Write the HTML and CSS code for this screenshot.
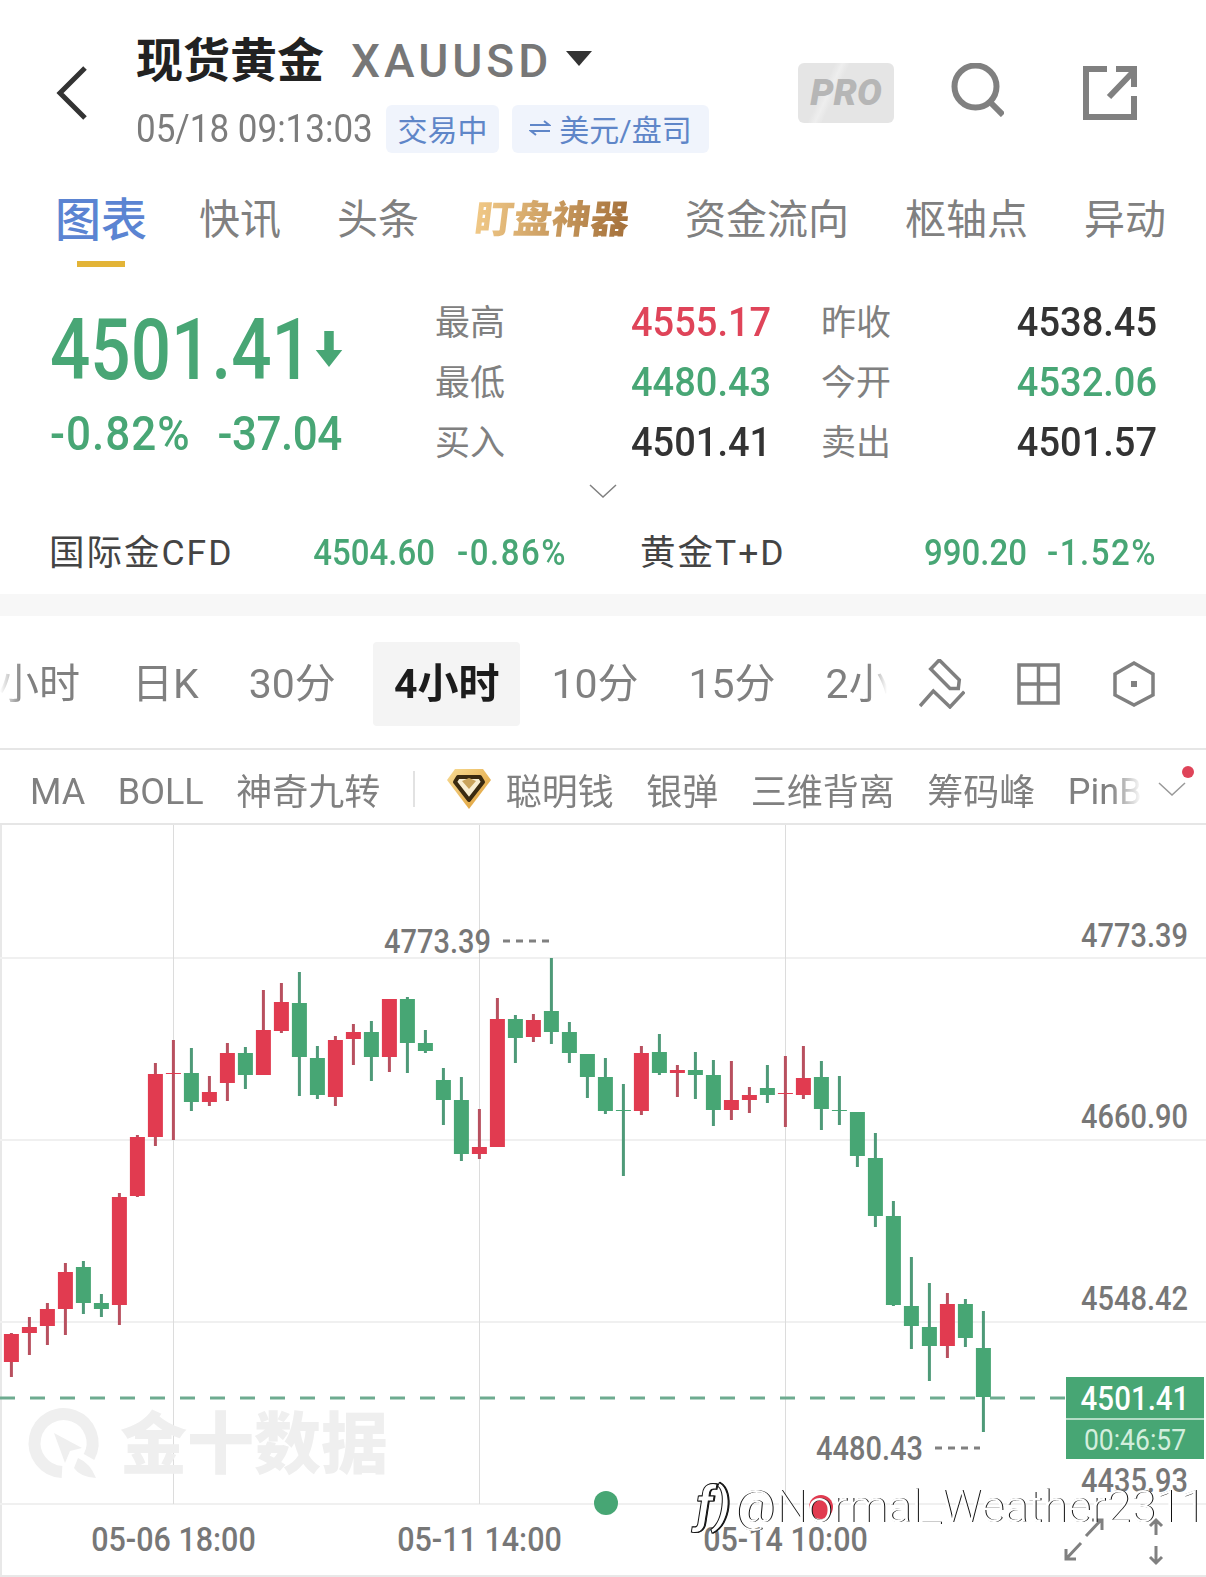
FILE: index.html
```html
<!DOCTYPE html>
<html lang="zh-CN">

<head>
    <meta charset="UTF-8">
    <meta name="viewport" content="width=device-width, initial-scale=1.0">
    <title>现货黄金 XAUUSD</title>
    <link rel="stylesheet" href="styles.css">
</head>

<body>
    <header class="top">
        <svg class="back" viewBox="0 0 32 54"><polyline points="29,2 4,27 29,52" /></svg>
        <div class="title-block">
            <div class="title-row">
                <h1>现货黄金</h1>
                <span class="symbol">XAUUSD</span>
                <i class="caret"></i>
            </div>
            <div class="meta-row">
                <span class="stamp">05/18 09:13:03</span>
                <span class="tag">交易中</span>
                <span class="tag tag-wide">
                    <svg class="swap" viewBox="0 0 22 18"><path d="M1 6h19l-5-4M21 12H2l5 4" /></svg>
                    美元/盘司
                </span>
            </div>
        </div>
        <div class="top-icons">
            <span class="pro">PRO</span>
            <svg class="search" viewBox="0 0 54 54"><circle cx="25.500" cy="23.500" r="21" /><path d="M38 37l15 15" /></svg>
            <svg class="share" viewBox="0 0 54 54"><path d="M24 3H3v48h48V30" /><path d="M26 31L50 6M33 3h18v18" /></svg>
        </div>
    </header>

    <nav class="tabs">
        <a class="tab active">图表</a>
        <a class="tab">快讯</a>
        <a class="tab">头条</a>
        <a class="tab gold">盯盘神器</a>
        <a class="tab">资金流向</a>
        <a class="tab">枢轴点</a>
        <a class="tab">异动</a>
    </nav>

    <section class="quote">
        <div class="quote-main">
            <div class="price"><span class="price-num">4501.41</span><svg class="arrow" viewBox="0 0 30 38"><path d="M10 0h10v20h9L15 38 1 20h9z" /></svg></div>
            <div class="change"><span class="change-pct">-0.82%</span><span class="change-abs">-37.04</span></div>
        </div>
        <div class="quote-grid">
            <span class="lbl">最高</span><span class="val up">4555.17</span>
            <span class="lbl">昨收</span><span class="val end">4538.45</span>
            <span class="lbl">最低</span><span class="val down">4480.43</span>
            <span class="lbl">今开</span><span class="val down end">4532.06</span>
            <span class="lbl">买入</span><span class="val">4501.41</span>
            <span class="lbl">卖出</span><span class="val end">4501.57</span>
        </div>
    </section>
    <div class="more"><svg viewBox="0 0 28 14"><polyline points="1,1 14,13 27,1" /></svg></div>

    <section class="related">
        <div class="rel-item first">
            <span class="rel-name">国际金CFD</span>
            <span class="rel-num">4504.60</span>
            <span class="rel-num rel-pct">-0.86%</span>
        </div>
        <div class="rel-item second">
            <span class="rel-name">黄金T+D</span>
            <span class="rel-num">990.20</span>
            <span class="rel-num rel-pct">-1.52%</span>
        </div>
    </section>

    <div class="band"></div>

    <section class="periods">
        <div class="period-scroll">
            <span class="period">1小时</span>
            <span class="period">日K</span>
            <span class="period">30分</span>
            <span class="period current">4小时</span>
            <span class="period">10分</span>
            <span class="period">15分</span>
            <span class="period">2小时</span>
        </div>
        <svg class="tool draw" viewBox="0 0 46 50"><path d="M20.300 1l20 20-1 8.500H31L11.700 10zM1 47l13.300-15L31 48l14.300-15.300" /></svg>
        <svg class="tool layout" viewBox="0 0 43 42"><path d="M2 2h39v38H2zM21.500 2v38M2 21h39" /></svg>
        <svg class="tool hex" viewBox="0 0 42 46"><path d="M21 2l19 11v21L21 44 2 34V13z" /><rect x="18" y="20" width="6" height="6" /></svg>
    </section>

    <section class="indicators">
        <div class="ind-scroll">
            <span class="en">MA</span>
            <span class="en">BOLL</span>
            <span>神奇九转</span>
            <i class="ind-sep"></i>
            <svg class="gem" viewBox="0 0 44 40">
                <defs>
                    <linearGradient id="gemGold" x1="0" y1="0" x2="1" y2="1">
                        <stop offset="0" stop-color="#f8dc95" />
                        <stop offset="1" stop-color="#dd9a30" />
                    </linearGradient>
                </defs>
                <path d="M8 0h28l8 11-22 29L0 11z" fill="url(#gemGold)" />
                <path d="M11 8h22l3 5-14 18L8 13z" fill="#f8edd0" stroke="#3a2a10" stroke-width="4" stroke-linejoin="round" />
                <path d="M15 12l7-3 7 3-7 8z" fill="#c9a35c" />
            </svg>
            <span class="ind-gem-label">聪明钱</span>
            <span>银弹</span>
            <span>三维背离</span>
            <span>筹码峰</span>
            <span class="en">PinBar</span>
        </div>
        <div class="ind-more">
            <svg viewBox="0 0 28 14"><polyline points="1,1 14,13 27,1" /></svg>
            <i class="dot"></i>
        </div>
    </section>

    <section class="chart">
        <svg id="kline" viewBox="0 825 1206 752">
            <g class="grid">
                <path d="M0 958H1206M0 1140H1206M0 1322H1206M0 1504H1206" />
                <path class="grid-v" d="M173.500 824V1504M479.500 824V1504M785.500 824V1504" />
            </g>

            <g class="wm">
                <path class="wm-ring" d="M89 1457A29 29 0 1 0 62 1472" />
                <path d="M54 1433l28 15-12 3-5 12zM78 1458q12 5 18 20q-16-1-22-10z" />
                <text x="120" y="1468">金十数据</text>
            </g>

            <g id="candles"></g>

            <path class="last-line" d="M0 1398H1066" />

            <g class="axis">
                <text x="1188" y="946" text-anchor="end">4773.39</text>
                <text x="1188" y="1127" text-anchor="end">4660.90</text>
                <text x="1188" y="1309" text-anchor="end">4548.42</text>
                <text x="1188" y="1491" text-anchor="end">4435.93</text>
                <text x="384" y="952">4773.39</text>
                <text x="816" y="1459">4480.43</text>
                <text class="axis-time" x="173.500" y="1550" text-anchor="middle">05-06 18:00</text>
                <text class="axis-time" x="479.500" y="1550" text-anchor="middle">05-11 14:00</text>
                <text class="axis-time" x="785.500" y="1550" text-anchor="middle">05-14 10:00</text>
            </g>
            <path class="mark-dash" d="M503 941H549M935 1448H980" />

            <g class="last-box">
                <rect x="1066" y="1377" width="138" height="82" />
                <path d="M1066 1419H1204" />
                <text class="last-price" x="1135" y="1409" text-anchor="middle">4501.41</text>
                <text class="last-time" x="1135" y="1449" text-anchor="middle">00:46:57</text>
            </g>

            <circle class="dot-g" cx="606" cy="1503" r="12" />
            <circle class="dot-r" cx="821" cy="1507" r="12" />

            <path class="expand" d="M1066 1559l15-16M1066 1549v10h10M1086 1536l15-16M1092 1520h10v10M1156 1521v14M1150 1526l6-6 6 6M1156 1546v17M1150 1557l6 6 6-6" />

            <g class="credit">
                <text class="credit-logo" x="696" y="1522">ƒ)</text>
                <text x="734" y="1522">@Normal_Weather2311</text>
            </g>
        </svg>
    </section>

    <script src="chart.js"></script>
</body>

</html>
```

FILE: styles.css
```css
* {
    box-sizing: border-box;
}

html,
body {
    margin: 0;
    padding: 0;
}

body {
    width: 1206px;
    height: 1577px;
    overflow: hidden;
    background: #fff;
    font-family: Roboto, "Noto Sans CJK SC", sans-serif;
    color: #333;
}

/* header */
.top {
    display: flex;
    height: 176px;
    padding-left: 56px;
}

.back {
    width: 32px;
    height: 54px;
    margin-top: 66px;
    fill: none;
    stroke: #333;
    stroke-width: 5;
}

.title-block {
    margin-left: 48px;
    padding-top: 37px;
}

.title-row {
    display: flex;
    align-items: center;
    height: 48px;
}

.title-row h1 {
    margin: 0;
    font-size: 47px;
    line-height: 48px;
    font-weight: 700;
    color: #222;
}

.symbol {
    margin-left: 27px;
    font-size: 46px;
    font-weight: 500;
    letter-spacing: 4px;
    color: #777;
}

.caret {
    width: 0;
    height: 0;
    margin: -6px 0 0 14px;
    border-left: 13px solid transparent;
    border-right: 13px solid transparent;
    border-top: 15px solid #333;
}

.meta-row {
    display: flex;
    align-items: center;
    margin-top: 20px;
}

.stamp {
    width: 250px;
    font-size: 35px;
    color: #7c7c7c;
    transform: scaleY(1.12);
}

.tag {
    display: flex;
    align-items: center;
    justify-content: center;
    width: 113px;
    height: 48px;
    padding-bottom: 3px;
    border-radius: 6px;
    background: #f0f4fc;
    color: #5f86c8;
    font-size: 30px;
}

.tag-wide {
    width: 197px;
    margin-left: 13px;
}

.swap {
    width: 22px;
    height: 18px;
    margin-right: 8px;
    fill: none;
    stroke: #5f86c8;
    stroke-width: 2;
}

.top-icons {
    display: flex;
    align-items: flex-start;
    margin-left: auto;
    padding: 63px 69px 0 0;
}

.pro {
    width: 96px;
    height: 60px;
    border-radius: 6px;
    background: linear-gradient(115deg, #e5e5e5 30%, #eeeeee 36%, #e5e5e5 42%);
    color: #b6b6b6;
    font-size: 37px;
    line-height: 60px;
    font-weight: 900;
    font-style: italic;
    text-align: center;
}

.search {
    width: 54px;
    height: 54px;
    margin-left: 56px;
    fill: none;
    stroke: #808080;
    stroke-width: 6;
}

.share {
    width: 54px;
    height: 54px;
    margin-left: 79px;
    margin-top: 3px;
    fill: none;
    stroke: #808080;
    stroke-width: 6;
}

/* tabs */
.tabs {
    display: flex;
    gap: 56px;
    height: 94px;
    padding: 18px 0 0 55px;
}

.tab {
    font-size: 41px;
    line-height: 52px;
    color: #808080;
}

.tab.active {
    margin-right: -4px;
    font-size: 46px;
    font-weight: 500;
    color: #5b84d2;
}

.tab.active::after {
    content: "";
    display: block;
    width: 48px;
    height: 6px;
    margin: 15px auto 0;
    background: #e3b437;
}

.tab.gold {
    display: inline-block;
    height: 52px;
    font-size: 38.500px;
    font-weight: 900;
    background: linear-gradient(90deg, #f1c987, #a4703a);
    -webkit-background-clip: text;
    background-clip: text;
    color: transparent;
    transform: skewX(-7deg);
}

/* quote */
.quote {
    display: flex;
    height: 214px;
    padding: 22px 49px 0 50px;
}

.quote-main {
    width: 385px;
}

.price {
    display: flex;
    align-items: center;
    height: 66px;
    margin-top: 24px;
    color: #48a675;
}

.price-num {
    font-size: 71px;
    font-weight: 500;
    transform: scaleY(1.2);
}

.arrow {
    width: 30px;
    height: 36px;
    margin-left: 2px;
    fill: #48a675;
}

.change {
    display: flex;
    gap: 27px;
    margin-top: 29px;
    font-size: 44px;
    line-height: 46px;
    font-weight: 500;
    color: #48a675;
    transform: scaleY(1.08);
}

.change-pct {
    letter-spacing: 1px;
}

.change-abs {
    letter-spacing: -0.500px;
}

.quote-grid {
    display: grid;
    flex: 1;
    grid-template-columns: 196px 190px 1fr auto;
    grid-auto-rows: 60px;
    align-items: center;
}

.lbl {
    margin-top: -6px;
    font-size: 35px;
    color: #808080;
}

.val {
    font-size: 38px;
    font-weight: 500;
    color: #333;
    transform: scaleY(1.05);
}

.val.up {
    color: #df4459;
}

.val.down {
    color: #48a675;
}

.more {
    display: flex;
    justify-content: center;
    height: 46px;
}

.more svg {
    width: 28px;
    height: 14px;
    fill: none;
    stroke: #808080;
    stroke-width: 1.500;
}

/* related */
.related {
    display: flex;
    height: 64px;
    padding: 0 49px 0 49px;
}

.rel-item {
    display: flex;
    align-items: center;
    height: 44px;
}

.rel-item.first {
    gap: 22px;
    width: 518px;
}

.rel-item.first .rel-name {
    margin-right: auto;
}

.rel-item.second {
    flex: 1;
    gap: 20px;
    margin-left: 73px;
}

.rel-item.second .rel-name {
    margin-right: auto;
}

.rel-name {
    margin-top: -6px;
    font-size: 35.500px;
    letter-spacing: 2px;
    color: #444;
}

.rel-num {
    font-size: 33px;
    font-weight: 500;
    color: #48a675;
    transform: scaleY(1.12);
}

.rel-pct {
    letter-spacing: 1.500px;
}

.band {
    height: 22px;
    background: #f7f7f7;
}

/* periods */
.periods {
    display: flex;
    align-items: center;
    height: 134px;
    border-bottom: 2px solid #e6e6e6;
    padding-top: 4px;
}

.period-scroll {
    display: flex;
    flex: none;
    align-items: center;
    gap: 12px;
    width: 887px;
    overflow: hidden;
    -webkit-mask-image: linear-gradient(90deg, transparent 0, #000 22px, #000 868px, transparent 887px);
    mask-image: linear-gradient(90deg, transparent 0, #000 22px, #000 868px, transparent 887px);
}

.period {
    flex: none;
    height: 84px;
    padding: 0 19px;
    border-radius: 4px;
    font-size: 41px;
    line-height: 84px;
    color: #808080;
}

.period:first-child {
    margin-left: -44px;
    margin-right: 2px;
}

.period.current {
    margin-left: 6px;
    padding: 0 21px;
    background: #f4f4f4;
    font-weight: 700;
    color: #1c1c1c;
}

.tool {
    flex: none;
    fill: none;
    stroke: #808080;
    stroke-width: 3.500;
}

.draw {
    width: 46px;
    height: 50px;
    margin-left: 32px;
}

.layout {
    width: 43px;
    height: 42px;
    margin-left: 52px;
}

.hex {
    width: 42px;
    height: 46px;
    margin-left: 53px;
}

.hex rect {
    fill: #808080;
    stroke: none;
}

/* indicators */
.indicators {
    display: flex;
    align-items: center;
    height: 75px;
    padding-top: 4px;
    border-bottom: 2px solid #e6e6e6;
}

.ind-scroll {
    display: flex;
    flex: none;
    align-items: center;
    gap: 32.500px;
    width: 1142px;
    overflow: hidden;
    padding-left: 30px;
    font-size: 36px;
    color: #808080;
    white-space: nowrap;
    -webkit-mask-image: linear-gradient(90deg, #000 1110px, transparent 1142px);
    mask-image: linear-gradient(90deg, #000 1110px, transparent 1142px);
}

.ind-scroll .en {
    margin-top: 6px;
}

.ind-sep {
    flex: none;
    width: 2px;
    height: 36px;
    background: #e2e2e2;
}

.gem {
    flex: none;
    width: 44px;
    height: 40px;
}

.ind-gem-label {
    margin-left: -18px;
}

.ind-more {
    position: relative;
    margin-left: 16px;
}

.ind-more svg {
    display: block;
    width: 28px;
    height: 14px;
    fill: none;
    stroke: #999;
    stroke-width: 1.500;
}

.dot {
    position: absolute;
    top: -16px;
    left: 24px;
    width: 12px;
    height: 12px;
    border-radius: 50%;
    background: #df4459;
}

/* chart */
.chart {
    height: 752px;
    border-left: 2px solid #e8e8e8;
    border-bottom: 2px solid #e8e8e8;
}

#kline {
    display: block;
    width: 1206px;
    height: 752px;
    margin-left: -2px;
}

.grid path {
    fill: none;
    stroke: #f0f0f0;
    stroke-width: 2;
}

.grid .grid-v {
    stroke: #dcdcdc;
    stroke-width: 1;
}

.wm {
    fill: #efefef;
}

.wm text {
    font-size: 67px;
    font-weight: 900;
}

.wm-ring {
    fill: none;
    stroke: #efefef;
    stroke-width: 12;
}

.candle-red {
    fill: #e13b50;
}

.candle-red-wick {
    fill: #b8505f;
}

.candle-green {
    fill: #47a674;
}

.candle-green-wick {
    fill: #4e9a78;
}

.last-line {
    fill: none;
    stroke: #6eab90;
    stroke-width: 3;
    stroke-dasharray: 15 15;
}

.axis text {
    font-size: 29px;
    font-weight: 500;
    fill: #777;
    transform-box: fill-box;
    transform-origin: center;
    transform: scaleY(1.12);
}

.axis .axis-time {
    font-size: 30.500px;
    transform: scaleY(1.06);
}

.mark-dash {
    fill: none;
    stroke: #808080;
    stroke-width: 3;
    stroke-dasharray: 7 6;
}

.last-box rect {
    fill: #47a674;
}

.last-box path {
    stroke: #d8eee2;
    stroke-width: 1.500;
}

.last-price,
.last-time {
    transform-box: fill-box;
    transform-origin: center;
    transform: scaleY(1.12);
}

.last-price {
    font-size: 29.500px;
    font-weight: 500;
    fill: #fff;
}

.last-time {
    font-size: 26.500px;
    fill: #d3eedd;
}

.dot-g {
    fill: #47a674;
}

.dot-r {
    fill: #e13b50;
}

.expand {
    fill: none;
    stroke: #808080;
    stroke-width: 3;
}

.credit text {
    font-size: 45px;
    font-weight: 300;
    fill: #fff;
    filter: drop-shadow(1px 0 0 #111);
}

.credit .credit-logo {
    font-style: italic;
    font-weight: 700;
    font-size: 50px;
    stroke: #111;
    stroke-width: 1;
}
```

FILE: chart.js
```js
// candles in page pixels: [type, bodyTop, bodyBottom, wickTop, wickBottom]
var data = [
    ['r', 1334, 1362, 1333, 1377], ['r', 1327, 1333, 1317, 1355], ['r', 1309, 1326, 1303, 1345],
    ['r', 1272, 1309, 1263, 1335], ['g', 1267, 1303, 1261, 1314], ['g', 1303, 1309, 1294, 1317],
    ['r', 1197, 1305, 1193, 1325], ['r', 1137, 1196, 1135, 1197], ['r', 1074, 1137, 1063, 1146],
    ['r', 1073, 1074, 1040, 1140], ['g', 1073, 1102, 1048, 1111], ['r', 1092, 1102, 1076, 1106],
    ['r', 1053, 1083, 1043, 1101], ['g', 1053, 1075, 1047, 1089], ['r', 1030, 1075, 990, 1075],
    ['r', 1002, 1031, 983, 1033], ['g', 1003, 1057, 972, 1096], ['g', 1058, 1095, 1046, 1099],
    ['r', 1040, 1097, 1036, 1106], ['r', 1032, 1039, 1024, 1065], ['g', 1032, 1057, 1021, 1081],
    ['r', 999, 1057, 999, 1072], ['g', 999, 1043, 997, 1073], ['g', 1043, 1051, 1030, 1053],
    ['g', 1080, 1100, 1068, 1125], ['g', 1100, 1154, 1077, 1161], ['r', 1147, 1154, 1109, 1159],
    ['r', 1019, 1147, 998, 1147], ['g', 1019, 1038, 1015, 1063], ['r', 1020, 1037, 1014, 1042],
    ['g', 1011, 1032, 958, 1044], ['g', 1032, 1053, 1022, 1063], ['g', 1054, 1077, 1054, 1098],
    ['g', 1077, 1111, 1058, 1114], ['g', 1110, 1111, 1084, 1176], ['r', 1053, 1111, 1046, 1115],
    ['g', 1052, 1073, 1034, 1075], ['r', 1070, 1073, 1065, 1097], ['g', 1070, 1075, 1052, 1099],
    ['g', 1075, 1110, 1060, 1126], ['r', 1100, 1110, 1061, 1120], ['r', 1095, 1100, 1087, 1113],
    ['g', 1088, 1095, 1065, 1103], ['r', 1093, 1094, 1056, 1127], ['r', 1078, 1095, 1046, 1099],
    ['g', 1077, 1109, 1061, 1130], ['g', 1110, 1111, 1076, 1125], ['g', 1112, 1156, 1112, 1167],
    ['g', 1158, 1216, 1133, 1227], ['g', 1216, 1305, 1201, 1306], ['g', 1306, 1326, 1257, 1349],
    ['g', 1327, 1346, 1283, 1381], ['r', 1304, 1346, 1293, 1358], ['g', 1304, 1338, 1299, 1347],
    ['g', 1348, 1397, 1311, 1432]
];

var NS = 'http://www.w3.org/2000/svg';
var group = document.getElementById('candles');

function addRect(x, y, w, h, cls) {
    var r = document.createElementNS(NS, 'rect');
    r.setAttribute('x', x);
    r.setAttribute('y', y);
    r.setAttribute('width', w);
    r.setAttribute('height', h);
    r.setAttribute('class', cls);
    group.appendChild(r);
}

data.forEach(function (c, i) {
    var x = 11.4 + i * 18;
    var name = c[0] === 'r' ? 'candle-red' : 'candle-green';
    addRect(x - 1.5, c[3], 3, c[4] - c[3], name + '-wick');
    addRect(x - 7.5, c[1], 15, c[2] - c[1], name);
});
```
